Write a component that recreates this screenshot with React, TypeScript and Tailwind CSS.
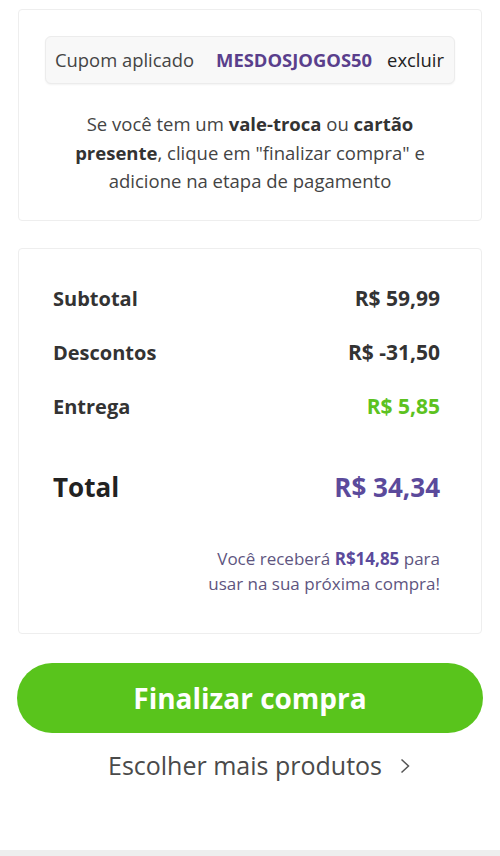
const font = { fontFamily: '"Open Sans", "Liberation Sans", sans-serif' };

interface SummaryRowProps {
  label: string;
  value: string;
  valueClassName?: string;
}

function SummaryRow({ label, value, valueClassName = "text-[#333]" }: SummaryRowProps) {
  return (
    <div className="flex h-[54px] items-center justify-between">
      <span className="text-[20px] font-bold text-[#333]">{label}</span>
      <span className={`text-[21px] font-bold ${valueClassName}`}>{value}</span>
    </div>
  );
}

export default function App() {
  return (
    <div className="flex min-h-[856px] flex-col bg-white text-[#333]" style={font}>
      <div className="flex flex-1 flex-col px-[17px] pt-[9px]">
        {/* coupon card */}
        <section className="mx-px rounded-[4px] border border-[#eeeeee] bg-white px-[26px] pb-[24px] pt-[26px]">
          <div className="flex h-[48px] items-center whitespace-nowrap rounded-[6px] border border-[#ececec] bg-[#f8f8f8] px-[9px] text-[18.4px] shadow-[0_1px_2px_rgba(0,0,0,0.05)]">
            <span className="shrink-0 text-[#444]">Cupom aplicado</span>
            <span className="ml-[22px] shrink-0 font-bold text-[#5a3f8c]">MESDOSJOGOS50</span>
            <span className="ml-[15px] shrink-0 text-[#222]">excluir</span>
          </div>
          <p className="mx-auto mt-[26px] max-w-[375px] text-center text-[18.5px] leading-[28.5px] text-[#444]">
            Se você tem um <b className="text-[#333]">vale-troca</b> ou{" "}
            <b className="text-[#333]">cartão presente</b>, clique em "finalizar compra" e
            adicione na etapa de pagamento
          </p>
        </section>

        {/* summary card */}
        <section className="mx-px mt-[27px] rounded-[4px] border border-[#eeeeee] bg-white pb-[37px] pl-[34px] pr-[41px] pt-[23px]">
          <SummaryRow label="Subtotal" value="R$ 59,99" />
          <SummaryRow label="Descontos" value="R$ -31,50" />
          <SummaryRow label="Entrega" value="R$ 5,85" valueClassName="text-[#5cc220]" />
          <div className="mt-[34px] flex items-center justify-between">
            <span className="text-[26px] font-bold text-[#222]">Total</span>
            <span className="text-[26px] font-bold text-[#5b4a9b]">R$ 34,34</span>
          </div>
          <p className="mt-[39px] text-right text-[17px] leading-[25px] text-[#5e5580]">
            Você receberá <b className="text-[#5b4a9b]">R$14,85</b> para
            <br />
            usar na sua próxima compra!
          </p>
        </section>

        <button className="mt-[29px] flex h-[70px] w-full items-center justify-center rounded-full bg-[#59c41c] text-[28px] font-bold text-white">
          Finalizar compra
        </button>

        <button className="mt-[15px] flex items-center justify-center gap-[18px] pl-[18px] text-[25px] leading-[34px] text-[#4a4a4a]">
          Escolher mais produtos
          <svg width="10" height="16" viewBox="0 0 10 16" fill="none" className="mt-[3px]">
            <polyline points="1.5,1.5 8.5,8 1.5,14.5" stroke="#555" strokeWidth="1.5" />
          </svg>
        </button>
      </div>
      <div className="h-[6px] bg-[#eeeeee]" />
    </div>
  );
}
